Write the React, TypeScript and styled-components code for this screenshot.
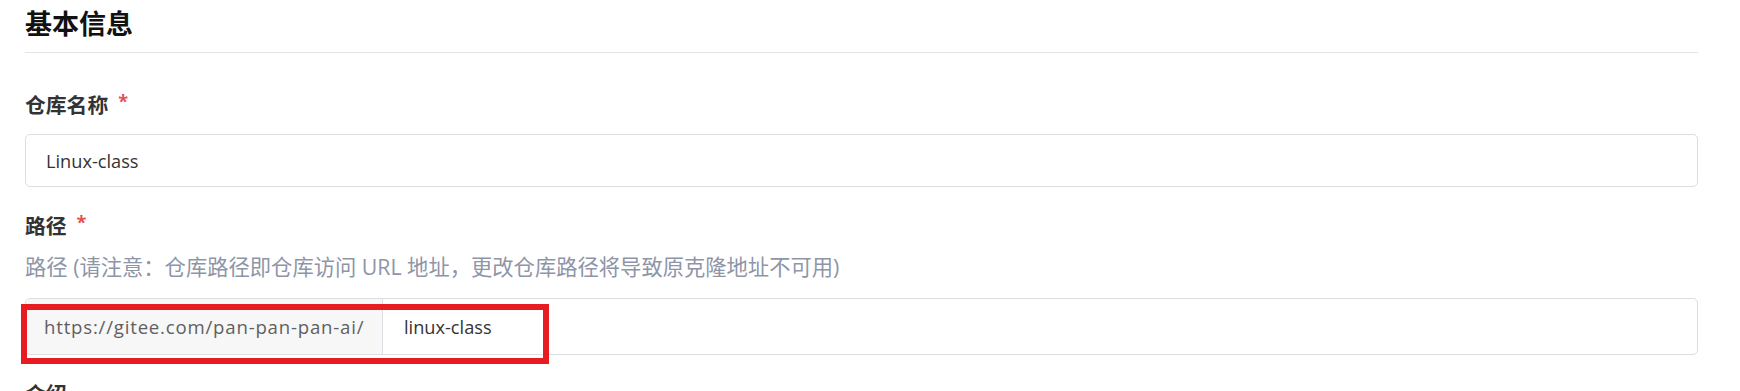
import React from "react";
import styled, { createGlobalStyle } from "styled-components";

const GlobalStyle = createGlobalStyle`
  html, body {
    margin: 0;
    padding: 0;
    background: #ffffff;
  }
  body {
    font-family: "Open Sans", "Noto Sans CJK SC", sans-serif;
  }
`;

// Styled components
const Page = styled.div`
  padding: 0 42px 0 25px;
  height: 391px;
  overflow: hidden;
`;

const SectionHeader = styled.h2`
  margin: 0;
  padding: 4px 0 8px;
  font-size: 27px;
  line-height: 40px;
  font-weight: 700;
  color: #111;
  border-bottom: 1px solid #e4e4e6;
`;

const Field = styled.div<{ $top: number }>`
  margin-top: ${(p) => p.$top}px;
`;

const Label = styled.div`
  font-size: 20.8px;
  line-height: 30px;
  font-weight: 700;
  color: #333;
`;

const Required = styled.span`
  display: inline-block;
  margin-left: 10px;
  font-size: 18px;
  line-height: 22px;
  vertical-align: top;
  color: #e4504f;
`;

const Help = styled.div`
  margin-top: 11px;
  font-size: 21.3px;
  line-height: 30px;
  color: #8e95a7;
`;

const TextInput = styled.div`
  margin-top: 14px;
  height: 53px;
  box-sizing: border-box;
  border: 1px solid #dcdee4;
  border-radius: 5px;
  padding: 0 20px;
  display: flex;
  align-items: center;
  font-size: 18.2px;
  color: #333;
`;

const InputGroup = styled.div`
  position: relative;
  margin-top: 16px;
  height: 57px;
  box-sizing: border-box;
  display: flex;
  border: 1px solid #dcdee4;
  border-radius: 5px;
`;

const Prefix = styled.div`
  display: flex;
  align-items: center;
  padding: 0 18px;
  width: 357px;
  box-sizing: border-box;
  background: #f7f7f7;
  border-right: 1px solid #dcdee4;
  border-radius: 5px 0 0 5px;
  font-size: 18.6px;
  letter-spacing: 0.8px;
  color: #606060;
  white-space: nowrap;
`;

const GroupValue = styled.div`
  flex: 1;
  display: flex;
  align-items: center;
  padding: 0 21px;
  font-size: 18.2px;
  color: #333;
`;

// annotation box drawn over the input group
const Highlight = styled.div`
  position: absolute;
  left: -5px;
  top: 5px;
  width: 528px;
  height: 60px;
  box-sizing: border-box;
  border: 6px solid #e71c22;
  pointer-events: none;
`;

const App = () => {
  return (
    <>
      <GlobalStyle />
      <Page>
        <SectionHeader>基本信息</SectionHeader>

        <Field $top={37}>
          <Label>
            仓库名称<Required>*</Required>
          </Label>
          <TextInput>Linux-class</TextInput>
        </Field>

        <Field $top={24}>
          <Label>
            路径<Required>*</Required>
          </Label>
          <Help>路径 (请注意：仓库路径即仓库访问 URL 地址，更改仓库路径将导致原克隆地址不可用)</Help>
          <InputGroup>
            <Prefix>https://gitee.com/pan-pan-pan-ai/</Prefix>
            <GroupValue>linux-class</GroupValue>
            <Highlight />
          </InputGroup>
        </Field>

        <Field $top={24}>
          <Label>介绍</Label>
        </Field>
      </Page>
    </>
  );
};

export default App;
